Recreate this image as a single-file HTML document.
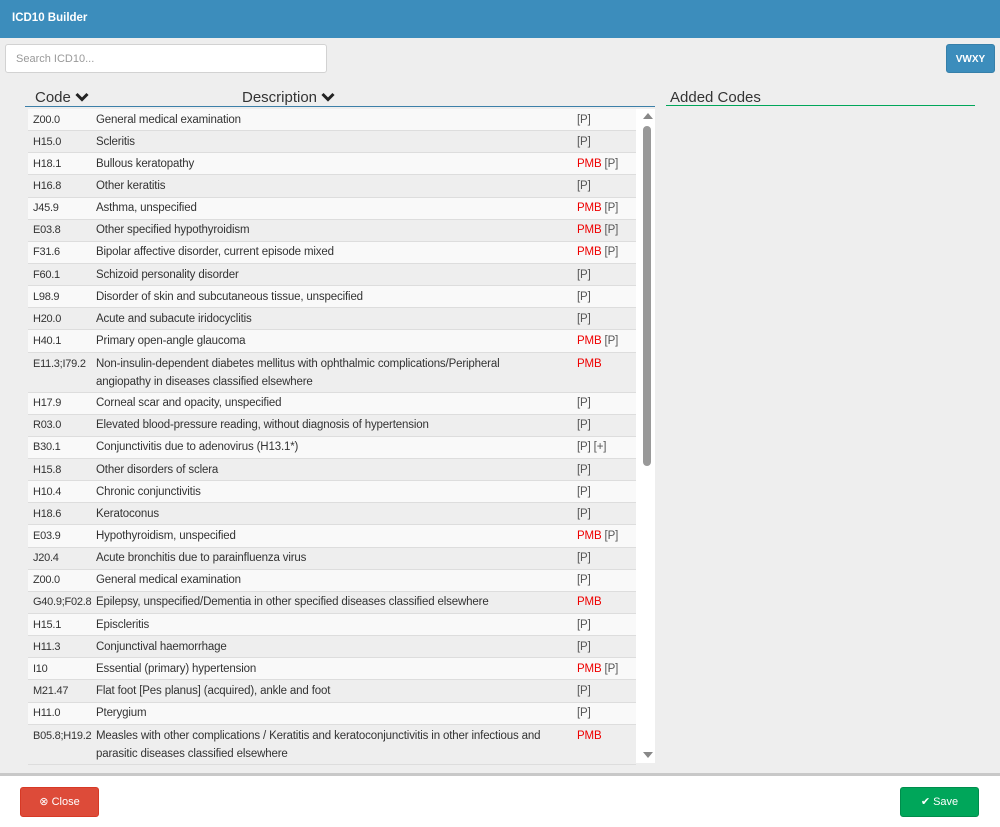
<!DOCTYPE html>
<html><head><style>
body{margin:0;width:1000px;height:827px;background:#fff;font-family:"Liberation Sans",sans-serif;position:relative;overflow:hidden}
.hdr{position:absolute;left:0;top:0;width:1000px;height:38px;background:#3c8dbc}
.hdr span{position:absolute;left:12px;top:12px;color:#fff;font-weight:bold;font-size:11.5px}
.main{position:absolute;left:0;top:38px;width:1000px;height:735px;background:#eee}
.search{position:absolute;left:5px;top:44px;width:322px;height:29px;border:1px solid #d2d2d2;border-radius:3px;background:#fff;box-sizing:border-box;font-size:11px;color:#999;padding:8px 10px}
.vw{position:absolute;left:946px;top:44px;width:49px;height:29px;background:#3c8dbc;border-radius:3px;color:#fff;font-size:10px;font-weight:bold;text-align:center;line-height:29px;border:1px solid #367fa9;box-sizing:border-box}
.th{position:absolute;top:89px;font-size:15px;color:#333}
.hl{position:absolute;left:25px;top:106px;width:630px;height:1px;background:#3c7fa8}
.tbl{position:absolute;left:28px;top:109px;width:608px}
.r{display:flex;font-size:11.5px;color:#333;border-bottom:1px solid #ddd;box-sizing:border-box;height:22.15px;align-items:center;letter-spacing:-0.15px}
.r:nth-child(odd){background:#f9f9f9}
.r:nth-child(even){background:#eee}
.c{width:68px;padding-left:5px;box-sizing:border-box;white-space:nowrap;font-size:11px;letter-spacing:-0.25px}
.d{width:481px;padding-right:26px;box-sizing:border-box;line-height:18px}
.t{color:#555}
.t b{color:#e00;font-weight:normal}
.r.two{height:40px;align-items:flex-start;padding-top:2px}
.r.two .c{line-height:18px}
.sb{position:absolute;left:636px;top:109px;width:19px;height:654px;background:#fff}
.thumb{position:absolute;left:643px;top:126px;width:8px;height:340px;background:#999;border-radius:4px}
.ad{position:absolute;left:670px;top:89px;font-size:15px;color:#333}
.al{position:absolute;left:666px;top:105px;width:309px;height:1px;background:#00a65a}
.sep{position:absolute;left:0;top:773px;width:1000px;height:3px;background:#c8c8c8}
.btn{position:absolute;top:787px;width:79px;height:30px;border-radius:3px;color:#fff;font-size:11px;line-height:28px;text-align:center}
</style></head><body>
<div class="hdr"><span>ICD10 Builder</span></div>
<div class="main"></div>
<div class="search">Search ICD10...</div>
<div class="vw">VWXY</div>
<div class="th" style="left:35px">Code <svg width="14" height="10" viewBox="0 0 14 10"><path d="M1.5 2 L7 7.5 L12.5 2" stroke="#222" stroke-width="3" fill="none"/></svg></div>
<div class="th" style="left:242px">Description <svg width="14" height="10" viewBox="0 0 14 10"><path d="M1.5 2 L7 7.5 L12.5 2" stroke="#222" stroke-width="3" fill="none"/></svg></div>
<div class="hl"></div>
<div class="sb"></div>
<svg style="position:absolute;left:643px;top:113px" width="10" height="6"><path d="M0 6 L5 0 L10 6Z" fill="#888"/></svg>
<div class="thumb"></div>
<svg style="position:absolute;left:643px;top:752px" width="10" height="6"><path d="M0 0 L5 6 L10 0Z" fill="#888"/></svg>
<div class="tbl">
<div class="r"><div class="c">Z00.0</div><div class="d">General medical examination</div><div class="t">[P]</div></div>
<div class="r"><div class="c">H15.0</div><div class="d">Scleritis</div><div class="t">[P]</div></div>
<div class="r"><div class="c">H18.1</div><div class="d">Bullous keratopathy</div><div class="t"><b>PMB</b> [P]</div></div>
<div class="r"><div class="c">H16.8</div><div class="d">Other keratitis</div><div class="t">[P]</div></div>
<div class="r"><div class="c">J45.9</div><div class="d">Asthma, unspecified</div><div class="t"><b>PMB</b> [P]</div></div>
<div class="r"><div class="c">E03.8</div><div class="d">Other specified hypothyroidism</div><div class="t"><b>PMB</b> [P]</div></div>
<div class="r"><div class="c">F31.6</div><div class="d">Bipolar affective disorder, current episode mixed</div><div class="t"><b>PMB</b> [P]</div></div>
<div class="r"><div class="c">F60.1</div><div class="d">Schizoid personality disorder</div><div class="t">[P]</div></div>
<div class="r"><div class="c">L98.9</div><div class="d">Disorder of skin and subcutaneous tissue, unspecified</div><div class="t">[P]</div></div>
<div class="r"><div class="c">H20.0</div><div class="d">Acute and subacute iridocyclitis</div><div class="t">[P]</div></div>
<div class="r"><div class="c">H40.1</div><div class="d">Primary open-angle glaucoma</div><div class="t"><b>PMB</b> [P]</div></div>
<div class="r two"><div class="c">E11.3;I79.2</div><div class="d">Non-insulin-dependent diabetes mellitus with ophthalmic complications/Peripheral angiopathy in diseases classified elsewhere</div><div class="t" style="line-height:18px"><b>PMB</b></div></div>
<div class="r"><div class="c">H17.9</div><div class="d">Corneal scar and opacity, unspecified</div><div class="t">[P]</div></div>
<div class="r"><div class="c">R03.0</div><div class="d">Elevated blood-pressure reading, without diagnosis of hypertension</div><div class="t">[P]</div></div>
<div class="r"><div class="c">B30.1</div><div class="d">Conjunctivitis due to adenovirus (H13.1*)</div><div class="t">[P] [+]</div></div>
<div class="r"><div class="c">H15.8</div><div class="d">Other disorders of sclera</div><div class="t">[P]</div></div>
<div class="r"><div class="c">H10.4</div><div class="d">Chronic conjunctivitis</div><div class="t">[P]</div></div>
<div class="r"><div class="c">H18.6</div><div class="d">Keratoconus</div><div class="t">[P]</div></div>
<div class="r"><div class="c">E03.9</div><div class="d">Hypothyroidism, unspecified</div><div class="t"><b>PMB</b> [P]</div></div>
<div class="r"><div class="c">J20.4</div><div class="d">Acute bronchitis due to parainfluenza virus</div><div class="t">[P]</div></div>
<div class="r"><div class="c">Z00.0</div><div class="d">General medical examination</div><div class="t">[P]</div></div>
<div class="r"><div class="c">G40.9;F02.8</div><div class="d">Epilepsy, unspecified/Dementia in other specified diseases classified elsewhere</div><div class="t"><b>PMB</b></div></div>
<div class="r"><div class="c">H15.1</div><div class="d">Episcleritis</div><div class="t">[P]</div></div>
<div class="r"><div class="c">H11.3</div><div class="d">Conjunctival haemorrhage</div><div class="t">[P]</div></div>
<div class="r"><div class="c">I10</div><div class="d">Essential (primary) hypertension</div><div class="t"><b>PMB</b> [P]</div></div>
<div class="r"><div class="c">M21.47</div><div class="d">Flat foot [Pes planus] (acquired), ankle and foot</div><div class="t">[P]</div></div>
<div class="r"><div class="c">H11.0</div><div class="d">Pterygium</div><div class="t">[P]</div></div>
<div class="r two"><div class="c">B05.8;H19.2</div><div class="d">Measles with other complications / Keratitis and keratoconjunctivitis in other infectious and parasitic diseases classified elsewhere</div><div class="t" style="line-height:18px"><b>PMB</b></div></div>
</div>
<div class="ad">Added Codes</div>
<div class="al"></div>
<div class="sep"></div>
<div class="btn" style="left:20px;background:#dd4b39;border:1px solid #d73925;box-sizing:border-box">&#x2297; Close</div>
<div class="btn" style="left:900px;background:#00a65a;border:1px solid #008d4c;box-sizing:border-box">&#x2714; Save</div>
</body></html>
